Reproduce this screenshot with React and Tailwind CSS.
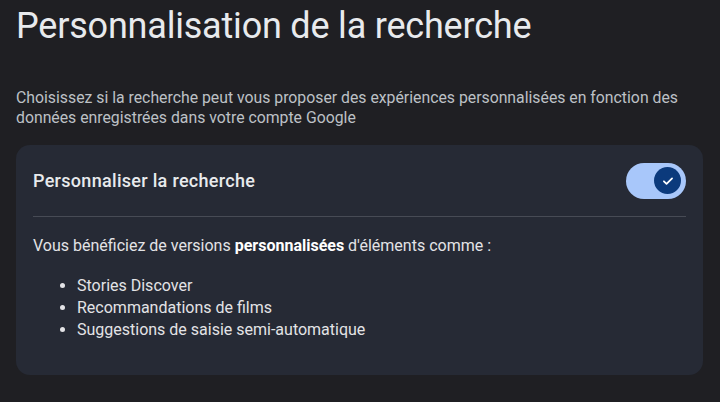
import React from "react";

const items = [
  "Stories Discover",
  "Recommandations de films",
  "Suggestions de saisie semi-automatique",
];

export default function App() {
  return (
    <div
      className="w-[720px] h-[402px] bg-[#1f1f23] px-4 pt-[4px] overflow-hidden"
      style={{ fontFamily: "Roboto, 'Liberation Sans', sans-serif" }}
    >
      <h1 className="text-[36px] leading-[44px] text-[#e8eaed] font-normal tracking-[-0.2px]">
        Personnalisation de la recherche
      </h1>
      <p className="mt-[40px] text-[15.8px] leading-[20px] text-[#bdc1c6]">
        Choisissez si la recherche peut vous proposer des expériences personnalisées en fonction des
        données enregistrées dans votre compte Google
      </p>
      <div className="mt-[17px] bg-[#262a35] rounded-[14px] px-[17px] h-[230px] w-[687px]">
        <div className="flex items-center justify-between h-[72px] border-b border-[#474b55]">
          <span className="text-[18px] font-medium text-[#e8eaed] tracking-[0.3px]">
            Personnaliser la recherche
          </span>
          <div className="w-[60px] h-[36px] rounded-full bg-[#a8c7fa] flex items-center justify-end pr-[5px]">
            <div className="w-[27px] h-[27px] rounded-full bg-[#0b3a7c] flex items-center justify-center">
              <svg width="14" height="14" viewBox="0 0 24 24" fill="none" stroke="#ffffff" strokeWidth="3" strokeLinecap="round" strokeLinejoin="round">
                <path d="M5 12.5l4.5 4.5L19 7.5" />
              </svg>
            </div>
          </div>
        </div>
        <p className="mt-[19px] text-[16px] leading-[20px] text-[#e3e3e6]">
          Vous bénéficiez de versions <span className="font-bold text-white">personnalisées</span> d'éléments comme :
        </p>
        <ul className="mt-[19px] pl-[44px] list-disc text-[16px] leading-[22px] text-[#e3e3e6]">
          {items.map((t, i) => (
            <li key={i}>{t}</li>
          ))}
        </ul>
      </div>
    </div>
  );
}
